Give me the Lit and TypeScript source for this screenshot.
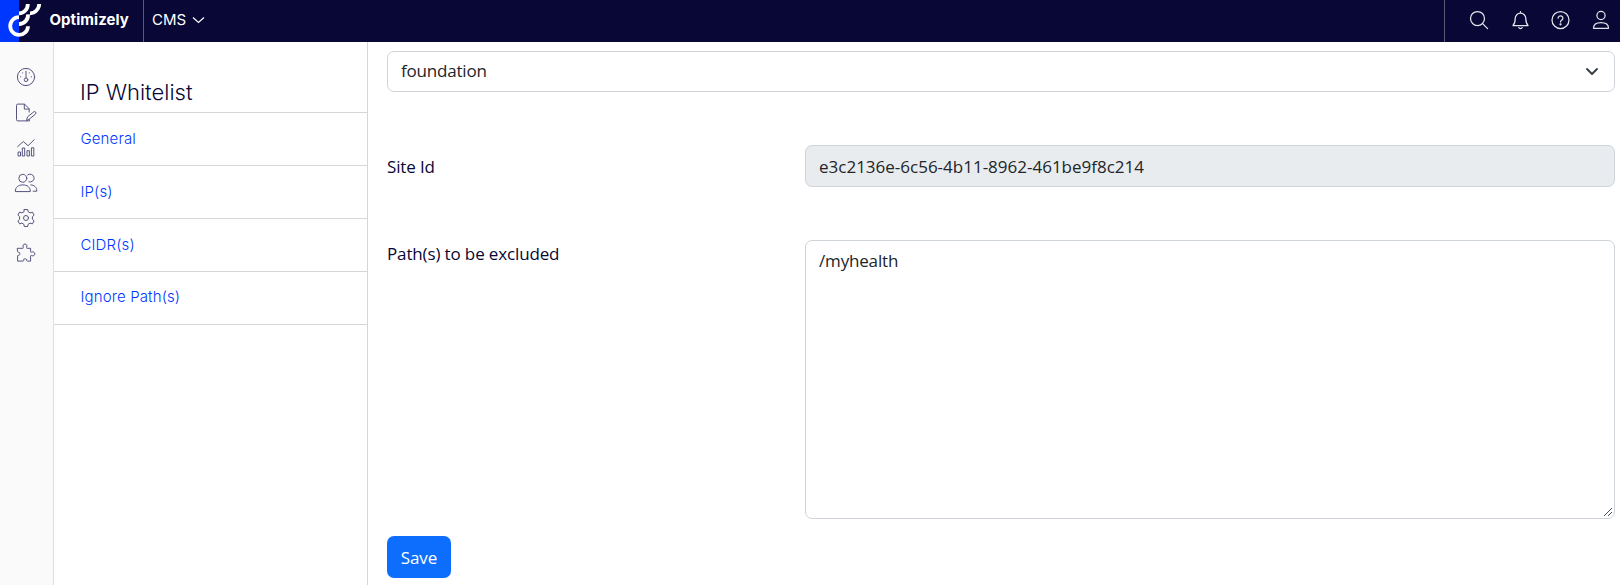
import { LitElement, html, css, svg } from "lit";
import { customElement } from "lit/decorators.js";

const icon = (size: number, body: unknown, width = 1) => html`<svg
  width=${size} height=${size} viewBox="0 0 ${size} ${size}" fill="none"
  stroke="currentColor" stroke-width=${width} stroke-linecap="round" stroke-linejoin="round">${body}</svg>`;

const search = icon(20, svg`<circle cx="8.5" cy="8.5" r="7"/><path d="M13.6 13.6 18.6 18.6"/>`, 1.25);
const bell = icon(20, svg`<path d="M3 15.500C4.800 13.700 5.200 12 5.200 8.500a5.300 5.300 0 0 1 10.600 0c0 3.500.400 5.200 2.200 7zM10.500 3.200V1.500M8.800 17.600a1.800 1.500 0 0 0 3.400 0"/>`, 1.25);
const help = icon(20, svg`<circle cx="10.500" cy="10" r="8.500"/><path d="M8.100 8.200a2.400 2.300 0 1 1 3.700 1.900c-.900.600-1.300 1-1.300 2"/><circle cx="10.500" cy="14.300" r=".5" fill="currentColor"/>`, 1.25);
const user = icon(20, svg`<circle cx="10" cy="5.500" r="4.100"/><path d="M2.500 18.300c0-3.800 2.900-5.600 7.500-5.600s7.500 1.800 7.500 5.600z"/>`, 1.25);

const railIcons = [
  icon(22, svg`<circle cx="11" cy="11" r="8.600"/><path d="M11 5.200v6.800"/><circle cx="11" cy="13.800" r="1.800"/><path d="M7.600 6.800v.1M14.400 6.800v.1M5.500 10.800h.3M16.200 10.800h.3"/>`),
  icon(22, svg`<path d="M14.500 18.700v1.200H2.800a1.300 1.300 0 0 1-1.300-1.300V4.400a1.300 1.300 0 0 1 1.300-1.300h6.700l4.700 4.700v3.300M9.300 3.300v4.800h4.700"/><path d="M11.600 19.300l.9-3.400 6.300-5.100a1.400 1.400 0 0 1 1.800 2.100l-6.200 5.200z"/>`),
  icon(22, svg`<path d="M2.600 10.700 8.300 5.500l4.800 4.200 6.100-6M3.500 16h2v4h-2zM7.700 12h2v8h-2zM12.400 14.700h2V20h-2zM16.800 11.800h2V20h-2z"/>`),
  icon(24, svg`<circle cx="8.800" cy="7.300" r="4"/><path d="M1.300 20.200c0-4.100 3-6.300 7.500-6.300s7.500 2.200 7.500 6.300zM13.700 3.900a4 4 0 1 1 1.200 7M16.800 13.900c3.700.100 6 2.300 6 6.300h-3.600"/>`),
  icon(22, svg`<path d="M9.300 2.500h3.400l.5 2.300 1.900 1.100 2.300-.8 1.700 3-1.700 1.600v2.600l1.700 1.600-1.700 3-2.300-.8-1.900 1.100-.5 2.300H9.300l-.5-2.300-1.900-1.100-2.300.8-1.700-3 1.700-1.600V9.700L2.900 8.100l1.700-3 2.300.8 1.900-1.100z"/><circle cx="11" cy="11" r="2.500"/>`),
  icon(22, svg`<path d="M2.600 6.300h5.200c.7 0 .8-.6.400-1.300a2 2 0 1 1 3.500 0c-.4.700-.3 1.300.4 1.300h3.500v3.400c0 .7.600.8 1.300.4a2 2 0 1 1 0 3.500c-.7-.4-1.300-.3-1.300.4v5.100h-3.300c-.7 0-.8-.6-.4-1.200a1.900 1.900 0 0 0-3.500 0c.4.600.3 1.200-.4 1.200H2.600v-5.200c0-.7.600-.8 1.300-.4a2 2 0 0 0 0-3.400c-.7.400-1.300.3-1.300-.4z"/>`),
];

@customElement("app-root")
export class AppRoot extends LitElement {
  static styles = css`
    :host { display: flex; flex-direction: column; height: 585px; background: #fff; color: #080736;
      font-family: Inter, sans-serif; overflow: hidden; }
    * { box-sizing: border-box; }
    svg { display: block; flex: none; }
    .top { height: 42px; flex: none; display: flex; background: #080736; color: #fff; font-size: 15px; }
    .brand { width: 144px; display: flex; border-right: 1px solid #5b5a79; }
    .name { font-weight: 700; line-height: 40px; padding-left: 7.500px; letter-spacing: .05px; }
    .product { display: flex; align-items: center; height: 39px; gap: 6px; padding-left: 8px; }
    .tools { margin-left: auto; width: 176px; display: flex; justify-content: space-between; align-items: center;
      padding: 0 9px 2px 24px; border-left: 1px solid #5b5a79; color: #e4e4ea; }
    .body { flex: 1; display: flex; min-height: 0; }
    .rail { width: 54px; flex: none; background: #fafafa; border-right: 1px solid #e0e0e0; display: flex;
      flex-direction: column; align-items: center; padding: 17px 1px 0 0; color: #56547f; }
    .cell { height: 35.300px; display: flex; align-items: center; }
    .side { width: 314px; flex: none; border-right: 1px solid #d6d6d6; }
    .title { margin: 0; height: 71px; padding: 37px 0 0 26px; font-size: 22px; line-height: 26px; font-weight: 300;
      border-bottom: 1px solid #d6d6d6; }
    .link { display: block; height: 53px; line-height: 52px; padding-left: 26.500px; font-size: 15px; font-weight: 300;
      letter-spacing: .13px; color: #0037ff; text-decoration: none; border-bottom: 1px solid #d6d6d6; }
    .link:last-child { line-height: 50px; }
    .main { flex: 1; padding: 9px 5px 0 19px; font-family: "Open Sans", sans-serif; font-size: 17px;
      display: flex; flex-direction: column; align-items: flex-start; letter-spacing: -.14px; }
    .box { border: 1px solid #ced4da; border-radius: 7px; color: #212529; padding: 0 13px; }
    .select { width: 100%; height: 41px; display: flex; align-items: center; justify-content: space-between;
      letter-spacing: -.2px; padding-right: 15px; line-height: 22px; }
    .value { padding-bottom: 2px; }
    .row { width: 100%; display: grid; grid-template-columns: 418px 1fr; }
    .first { margin-top: 53px; }
    .second { margin-top: 53px; }
    .label { line-height: 24px; padding-top: 10px; }
    .second .label { padding-top: 2px; }
    .field { height: 42px; line-height: 42px; background: #e9ecef; letter-spacing: 0; }
    .area { height: 279px; padding-top: 8px; line-height: 24px; letter-spacing: -.17px; display: flex;
      justify-content: space-between; padding-right: 0; }
    .grip { align-self: flex-end; }
    .save { margin: 17px 0 0; width: 64px; height: 42px; border: 0; border-radius: 7px; background: #0d6efd;
      color: #fff; font: inherit; letter-spacing: -.1px; padding: 0; }
  `;

  render() {
    return html`
      <header class="top">
        <div class="brand">
          <svg width="42" height="42" viewBox="0 0 42 42" fill="none" stroke="#fff" stroke-width="3.800">
            <path d="M0 0h19v42H0z" fill="#0037ff" stroke="none"/>
            <path d="M19 13.300A9 9 0 0 0 27.800 4M30 13.300A9.500 9.500 0 0 0 39.200 4M19 24A9 9 0 0 0 28 14.300M19 17.100A8.900 8.900 0 1 0 28 26.200"/>
          </svg>
          <span class="name">Optimizely</span>
        </div>
        <div class="product">CMS
          <svg width="13" height="8" viewBox="0 0 13 8" fill="none" stroke="#fff" stroke-width="1.200"><path d="M1 1.500 6.500 6.500 12 1.500"/></svg>
        </div>
        <div class="tools">${search}${bell}${help}${user}</div>
      </header>
      <div class="body">
        <div class="rail">${railIcons.map((i) => html`<div class="cell">${i}</div>`)}</div>
        <nav class="side">
          <h1 class="title">IP Whitelist</h1>
          ${["General", "IP(s)", "CIDR(s)", "Ignore Path(s)"].map((t) => html`<a class="link">${t}</a>`)}
        </nav>
        <main class="main">
          <div class="box select"><span class="value">foundation</span>
            <svg width="14" height="9" viewBox="0 0 14 9" fill="none" stroke="#343a40" stroke-width="1.800" stroke-linecap="round" stroke-linejoin="round"><path d="M2 2l5 5 5-5"/></svg>
          </div>
          <div class="row first"><label class="label">Site Id</label>
            <div class="box field">e3c2136e-6c56-4b11-8962-461be9f8c214</div></div>
          <div class="row second"><label class="label">Path(s) to be excluded</label>
            <div class="box area">/myhealth
              <svg class="grip" width="11" height="11" viewBox="0 0 11 11" stroke="#555"><path d="M1 9 9 1M5 9 9 5"/></svg>
            </div></div>
          <button class="save">Save</button>
        </main>
      </div>`;
  }
}
